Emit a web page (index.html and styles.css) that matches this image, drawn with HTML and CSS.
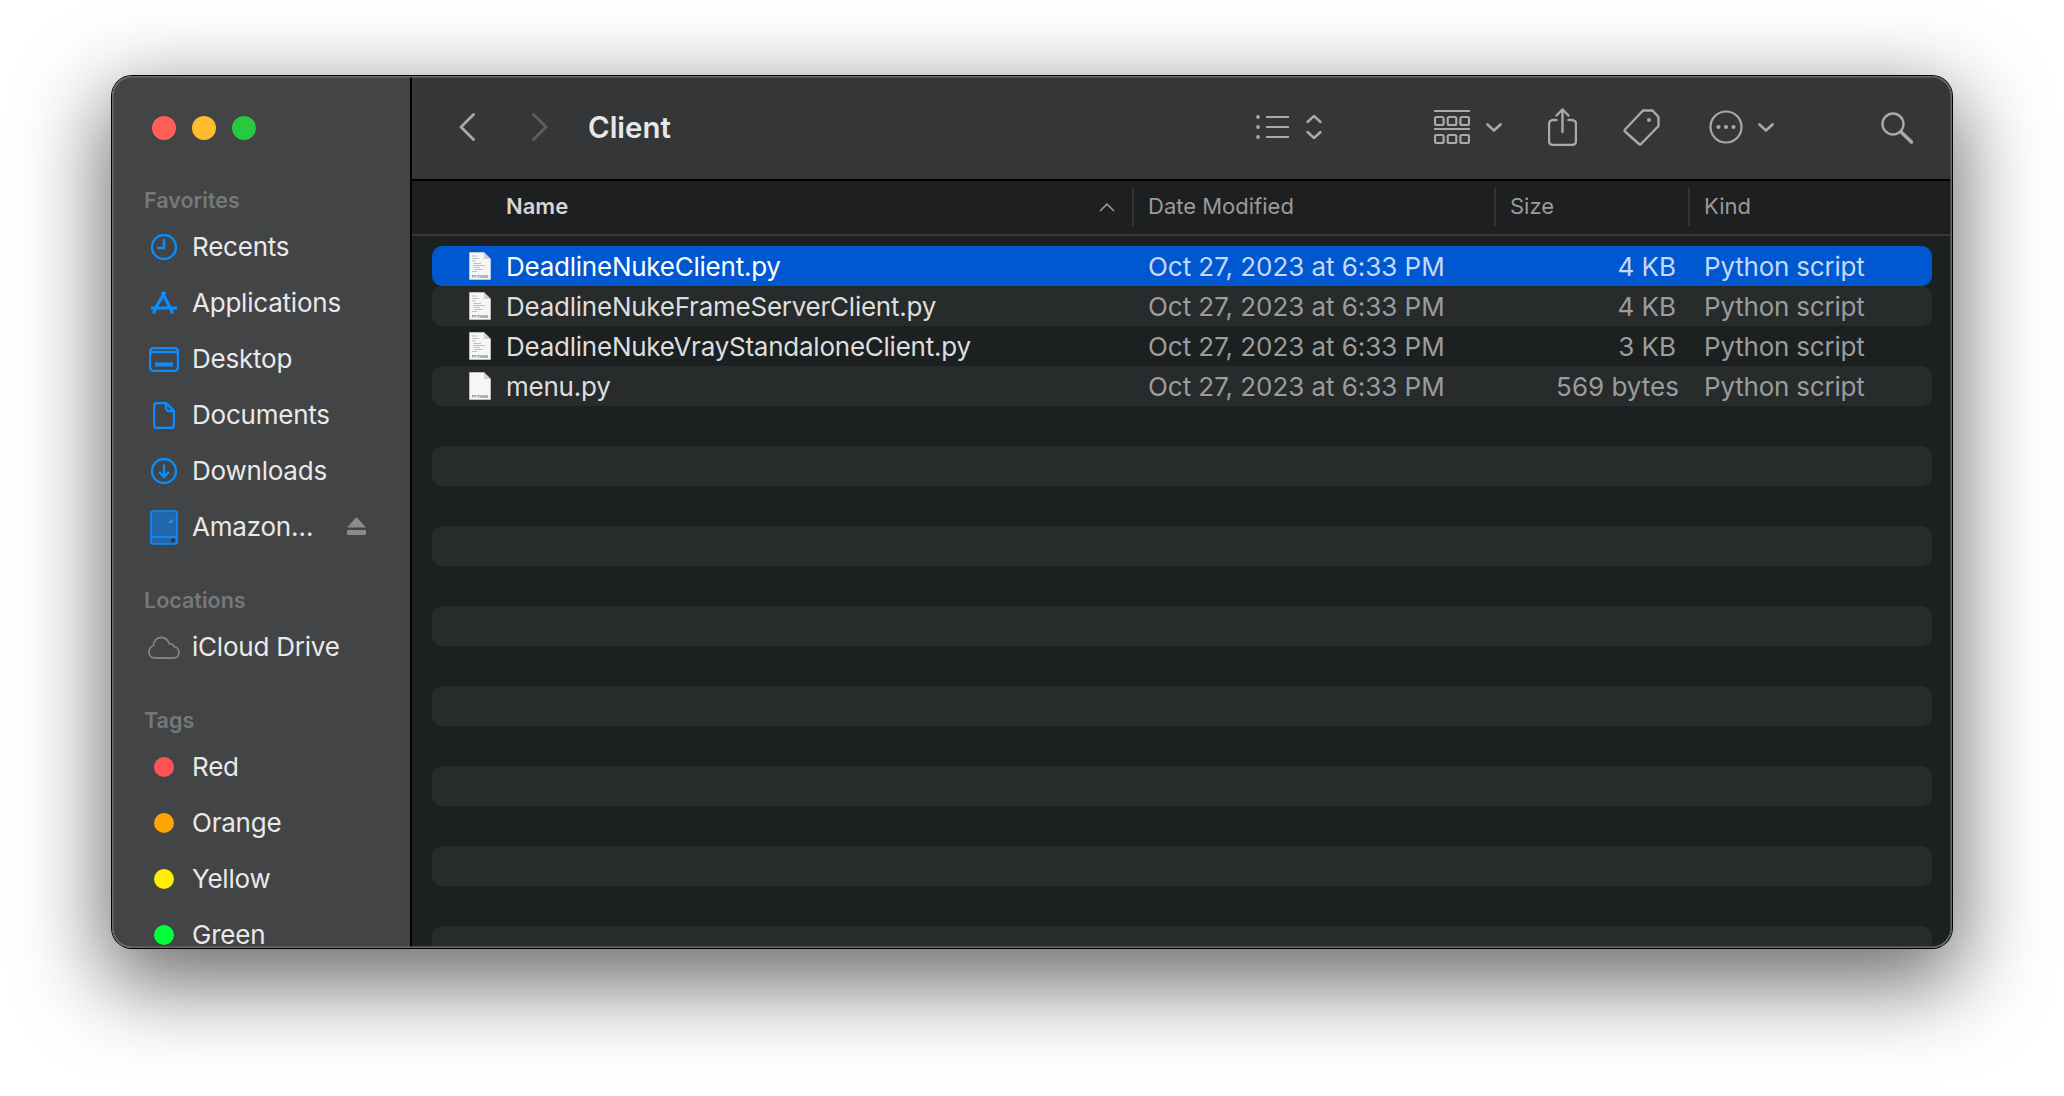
FILE: index.html
```html
<!DOCTYPE html>
<html lang="en">
<head>
<meta charset="utf-8">
<title>Client</title>
<link rel="stylesheet" href="styles.css">
</head>
<body>
<svg class="defs" width="0" height="0" aria-hidden="true">
  <symbol id="file-base" viewBox="0 0 22 28">
    <path d="M0.5 0.5H15L21.5 7V27.5H0.5Z" fill="#f6f6f6" stroke="#dcdcdc" stroke-width="0.6"/>
    <path d="M15 0.5V7H21.5Z" fill="#d0d0d0"/>
    <text x="11" y="26" font-family="Inter, sans-serif" font-size="3.6" font-weight="600" text-anchor="middle" fill="#666" letter-spacing="0.1">PYTHON</text>
  </symbol>
  <symbol id="file-lines" viewBox="0 0 22 28">
    <path d="M3 4H8M3 6.5H10M3 9H7M4 11.5H12M4 13.5H16M5 15.5H11M5 17.5H14M3 19.5H8" stroke="#b4b4b4" stroke-width="0.8" fill="none"/>
  </symbol>
  <symbol id="chev-down" viewBox="0 0 16 9">
    <path d="M1.5 1.5L8 7.5L14.5 1.5" fill="none" stroke="#a9a9a9" stroke-width="2.6" stroke-linecap="round" stroke-linejoin="round"/>
  </symbol>
</svg>
<main class="window">
  <aside class="sidebar">
    <div class="lights">
      <span class="light light-red"></span>
      <span class="light light-yellow"></span>
      <span class="light light-green"></span>
    </div>
    <section class="side-section">
      <h2 class="side-heading">Favorites</h2>
      <div class="side-item">
        <span class="side-icon"><svg width="26" height="26" viewBox="0 0 26 26" class="blue-stroke"><circle cx="13" cy="13" r="12"/><path d="M13 5V14H6"/></svg></span>
        <span>Recents</span>
      </div>
      <div class="side-item">
        <span class="side-icon"><svg width="28" height="26" viewBox="0 0 28 26" class="blue-stroke thick"><path d="M15 2L5.5 18M12 2L23 23.5M1 18H27M5.5 18L3.5 23.5"/></svg></span>
        <span>Applications</span>
      </div>
      <div class="side-item">
        <span class="side-icon"><svg width="30" height="25" viewBox="0 0 30 25" class="blue-stroke"><rect x="1" y="1" width="28" height="23" rx="4"/><path d="M1 5H29"/><rect class="blue-fill" x="6" y="15.5" width="18" height="4"/></svg></span>
        <span>Desktop</span>
      </div>
      <div class="side-item">
        <span class="side-icon"><svg width="22" height="27" viewBox="0 0 22 27" class="blue-stroke"><path d="M4 1H13L21 9V23A3 3 0 0 1 18 26H4A3 3 0 0 1 1 23V4A3 3 0 0 1 4 1Z"/><path d="M13 1V6A3 3 0 0 0 16 9H21"/></svg></span>
        <span>Documents</span>
      </div>
      <div class="side-item">
        <span class="side-icon"><svg width="26" height="26" viewBox="0 0 26 26" class="blue-stroke"><circle cx="13" cy="13" r="12"/><path d="M13 6.5V19M8 14L13 19L18 14"/></svg></span>
        <span>Downloads</span>
      </div>
      <div class="side-item">
        <span class="side-icon"><svg width="28" height="35" viewBox="0 0 28 35"><rect x="1" y="1" width="26" height="33" rx="2" fill="#1f66ad" stroke="#0a8dff" stroke-width="1.6"/><path d="M1 27H27" stroke="#0a8dff" stroke-width="1.6"/><circle cx="23" cy="30.5" r="2" fill="#333"/><path d="M18 12L25 8L21 14Z" fill="#2f86dc"/></svg></span>
        <span>Amazon…</span>
        <svg class="eject" width="19" height="18" viewBox="0 0 19 18"><path d="M9.5 0L19 10.5H0Z"/><rect y="13" width="19" height="5" rx="1"/></svg>
      </div>
    </section>
    <section class="side-section">
      <h2 class="side-heading">Locations</h2>
      <div class="side-item">
        <span class="side-icon"><svg width="32" height="23" viewBox="0 0 32 23" fill="none" stroke="#818284" stroke-width="1.8"><path d="M7 22H25.5C29 22 31 19.5 31 16.5C31 13.5 29 11 26 10.7C25.5 8.5 23.5 7.5 21.5 8C20 4 16.5 1.5 13 1.5C8.5 1.5 5.5 5 5.5 9.5C3 10.5 1 13 1 16C1 19.5 3.5 22 7 22Z"/></svg></span>
        <span>iCloud Drive</span>
      </div>
    </section>
    <section class="side-section">
      <h2 class="side-heading">Tags</h2>
      <div class="side-item"><span class="side-icon"><span class="tag-dot tag-red"></span></span><span>Red</span></div>
      <div class="side-item"><span class="side-icon"><span class="tag-dot tag-orange"></span></span><span>Orange</span></div>
      <div class="side-item"><span class="side-icon"><span class="tag-dot tag-yellow"></span></span><span>Yellow</span></div>
      <div class="side-item"><span class="side-icon"><span class="tag-dot tag-green"></span></span><span>Green</span></div>
    </section>
  </aside>
  <div class="content">
    <header class="toolbar">
      <svg class="nav-back" width="16" height="28" viewBox="0 0 16 28"><path d="M14.5 1.5L2 14L14.5 26.5"/></svg>
      <svg class="nav-forward" width="16" height="28" viewBox="0 0 16 28"><path d="M1.5 1.5L14 14L1.5 26.5"/></svg>
      <h1 class="title">Client</h1>
      <div class="tools">
        <div class="tool tool-list">
          <svg width="33" height="24" viewBox="0 0 33 24" class="tool-stroke"><path d="M10 2H33M10 12H33M10 22H33"/><circle class="tool-fill" cx="2" cy="2" r="1.9"/><circle class="tool-fill" cx="2" cy="12" r="1.9"/><circle class="tool-fill" cx="2" cy="22" r="1.9"/></svg>
          <svg width="16" height="26" viewBox="0 0 16 26" class="tool-stroke round"><path d="M1.5 8L8 2L14.5 8M1.5 18L8 24L14.5 18"/></svg>
        </div>
        <div class="tool tool-gallery">
          <svg width="36" height="36" viewBox="0 0 36 36" class="tool-stroke"><path d="M0 2H36M0 20H36"/><rect x="1" y="8" width="8.6" height="8" rx="1.5"/><rect x="13.7" y="8" width="8.6" height="8" rx="1.5"/><rect x="26.4" y="8" width="8.6" height="8" rx="1.5"/><rect x="1" y="26" width="8.6" height="8" rx="1.5"/><rect x="13.7" y="26" width="8.6" height="8" rx="1.5"/><rect x="26.4" y="26" width="8.6" height="8" rx="1.5"/></svg>
          <svg width="16" height="9" viewBox="0 0 16 9"><use href="#chev-down"/></svg>
        </div>
        <svg class="tool-share tool-stroke round" width="29" height="38" viewBox="0 0 29 38"><path d="M14.5 1.5V24M8.5 7.5L14.5 1.5L20.5 7.5"/><path d="M8.5 12H5A4 4 0 0 0 1 16V33A4 4 0 0 0 5 37H24A4 4 0 0 0 28 33V16A4 4 0 0 0 24 12H20.5"/></svg>
        <svg class="tool-tag tool-stroke round" width="37" height="37" viewBox="0 0 37 37"><path d="M20 1.5H29.5L35.5 8V17L18 35A1.5 1.5 0 0 1 16 35L2 22.5A1.5 1.5 0 0 1 2 20.5Z"/><circle class="tool-fill" cx="26" cy="11" r="2"/></svg>
        <div class="tool tool-more">
          <svg width="34" height="34" viewBox="0 0 34 34" class="tool-stroke"><circle cx="17" cy="17" r="15.5"/><circle class="tool-fill" cx="9.5" cy="17" r="2.1"/><circle class="tool-fill" cx="17" cy="17" r="2.1"/><circle class="tool-fill" cx="24.5" cy="17" r="2.1"/></svg>
          <svg width="16" height="9" viewBox="0 0 16 9"><use href="#chev-down"/></svg>
        </div>
        <svg class="tool-search tool-stroke round" width="32" height="33" viewBox="0 0 32 33"><circle cx="12" cy="13" r="10.5"/><path d="M20.5 21.5L30.5 31" class="thicker"/></svg>
      </div>
    </header>
    <div class="col-header">
      <div class="hcell hcell-name">Name<svg class="sort" width="16" height="9" viewBox="0 0 16 9"><path d="M1 8L8 1.2L15 8"/></svg></div>
      <div class="hcell hcell-date">Date Modified</div>
      <div class="hcell hcell-size">Size</div>
      <div class="hcell hcell-kind">Kind</div>
    </div>
    <div class="list">
      <div class="row row-selected">
        <svg class="file-icon" width="22" height="28"><use href="#file-base"/><use href="#file-lines"/></svg>
        <span class="name">DeadlineNukeClient.py</span><span class="date">Oct 27, 2023 at 6:33 PM</span><span class="size">4 KB</span><span class="kind">Python script</span>
      </div>
      <div class="row">
        <svg class="file-icon" width="22" height="28"><use href="#file-base"/><use href="#file-lines"/></svg>
        <span class="name">DeadlineNukeFrameServerClient.py</span><span class="date">Oct 27, 2023 at 6:33 PM</span><span class="size">4 KB</span><span class="kind">Python script</span>
      </div>
      <div class="row">
        <svg class="file-icon" width="22" height="28"><use href="#file-base"/><use href="#file-lines"/></svg>
        <span class="name">DeadlineNukeVrayStandaloneClient.py</span><span class="date">Oct 27, 2023 at 6:33 PM</span><span class="size">3 KB</span><span class="kind">Python script</span>
      </div>
      <div class="row">
        <svg class="file-icon" width="22" height="28"><use href="#file-base"/></svg>
        <span class="name">menu.py</span><span class="date">Oct 27, 2023 at 6:33 PM</span><span class="size size-bytes">569 bytes</span><span class="kind">Python script</span>
      </div>
      <div class="row"></div><div class="row"></div><div class="row"></div><div class="row"></div>
      <div class="row"></div><div class="row"></div><div class="row"></div><div class="row"></div>
      <div class="row"></div><div class="row"></div><div class="row"></div><div class="row"></div>
      <div class="row"></div><div class="row"></div>
    </div>
  </div>
</main>
</body>
</html>
```
FILE: styles.css
```css
* { box-sizing: border-box; }
html, body { margin: 0; height: 100%; background: #fff; overflow: hidden; }
body { padding: 76px 0 0 112px; font-family: Inter, "Noto Sans", sans-serif; }
.defs { position: absolute; }

.window {
  position: relative;
  display: flex;
  width: 1840px;
  height: 872px;
  border-radius: 20px;
  overflow: hidden;
  box-shadow: 0 0 0 1px #000, 0 28px 85px 8px rgba(0, 0, 0, .58);
}
.window::after {
  content: "";
  position: absolute;
  inset: 0;
  border-radius: 20px;
  box-shadow: inset 0 0 0 1.5px #6a6b6c;
  pointer-events: none;
}

/* Sidebar */
.sidebar {
  flex: 0 0 300px;
  padding-left: 32px;
  background: #434446;
  border-right: 2px solid #000;
  color: #e9e9e9;
  overflow: hidden;
}
.lights { display: flex; gap: 16px; margin: 40px 0 46px 8px; }
.light { width: 24px; height: 24px; border-radius: 50%; }
.light-red { background: #ff5f57; }
.light-yellow { background: #febc2e; }
.light-green { background: #28c840; }

.side-section { margin-bottom: 31px; }
.side-heading {
  margin: 0 0 5px;
  font-size: 21.5px;
  line-height: 28px;
  font-weight: 600;
  color: #77787a;
}
.side-item {
  display: flex;
  align-items: center;
  height: 56px;
  padding: 0 44px 2px 0;
  font-size: 26px;
  letter-spacing: -0.22px;
}
.side-icon {
  display: flex;
  align-items: center;
  justify-content: center;
  flex: 0 0 40px;
  margin: 2px 8px 0 0;
}
.blue-stroke { fill: none; stroke: #0a8dff; stroke-width: 2.4; }
.blue-stroke.thick { stroke-width: 3.2; }
.blue-fill { fill: #0a8dff; stroke: none; }
.eject { margin-left: auto; fill: #8a8b8d; }
.tag-dot { width: 20px; height: 20px; border-radius: 50%; }
.tag-red { background: #ff5257; }
.tag-orange { background: #ffa500; }
.tag-yellow { background: #fff000; }
.tag-green { background: #00ff3a; }

/* Main */
.content { flex: 1; display: flex; flex-direction: column; min-width: 0; background: #1c2020; }
.toolbar {
  display: flex;
  align-items: center;
  flex: 0 0 105px;
  padding: 0 39px 1px 47px;
  background: #353638;
  border-bottom: 2px solid #000;
}
.nav-back, .nav-forward { fill: none; stroke-width: 2.8; stroke-linecap: round; stroke-linejoin: round; }
.nav-back { stroke: #a9a9a9; }
.nav-forward { stroke: #5d5e60; margin-left: 57px; }
.title { margin: 0 0 0 40px; font-size: 29.4px; font-weight: 600; color: #e8e8e8; }
.tools { display: flex; align-items: center; margin-left: auto; }
.tool { display: flex; align-items: center; }
.tool-list { gap: 17px; }
.tool-gallery { gap: 16px; margin-left: 112px; }
.tool-share { margin-left: 46px; }
.tool-tag { margin-left: 46px; }
.tool-more { gap: 15px; margin-left: 49px; }
.tool-search { margin-left: 107px; }
.tool-stroke { fill: none; stroke: #a9a9a9; stroke-width: 2.2; }
.tool-stroke.round { stroke-linecap: round; stroke-linejoin: round; stroke-width: 2.4; }
.tool-fill { fill: #a9a9a9; stroke: none; }
.thicker { stroke-width: 3.6; }

.col-header {
  display: flex;
  align-items: center;
  flex: 0 0 55px;
  padding-bottom: 2px;
  background: #1e1f21;
  border-bottom: 2px solid #38393b;
  font-size: 22px;
  color: #9a9a9a;
}
.hcell { display: flex; align-items: center; height: 38px; padding: 0 0 2px 14px; border-left: 2px solid #333437; }
.hcell-name {
  flex: 0 0 720px;
  padding-left: 94px;
  border-left: 0;
  font-weight: 600;
  color: #d5d5d5;
}
.sort { margin: 4px 17px 0 auto; fill: none; stroke: #9a9a9a; stroke-width: 1.6; }
.hcell-date { flex: 0 0 362px; }
.hcell-size { flex: 0 0 194px; }
.hcell-kind { flex: 1; }

.list { flex: 1; min-height: 0; overflow: hidden; padding: 10px 20px 0 20px; }
.row {
  display: grid;
  grid-template-columns: 74px 642px 400px 128px 1fr;
  align-items: center;
  height: 40px;
  border-radius: 10px;
  font-size: 26px;
  color: #9b9c9c;
}
.row:nth-child(even) { background: #272b2c; }
.row-selected { background: #0058d0; color: #c6d7f7; }
.file-icon { justify-self: end; margin-right: 15px; }
.name { color: #dedede; white-space: nowrap; letter-spacing: -0.24px; }
.row-selected .name { color: #fff; }
.date { letter-spacing: -0.05px; }
.size { text-align: right; white-space: nowrap; }
.size-bytes { margin-right: -3px; }
.kind { padding-left: 28px; white-space: nowrap; letter-spacing: -0.2px; }
```
